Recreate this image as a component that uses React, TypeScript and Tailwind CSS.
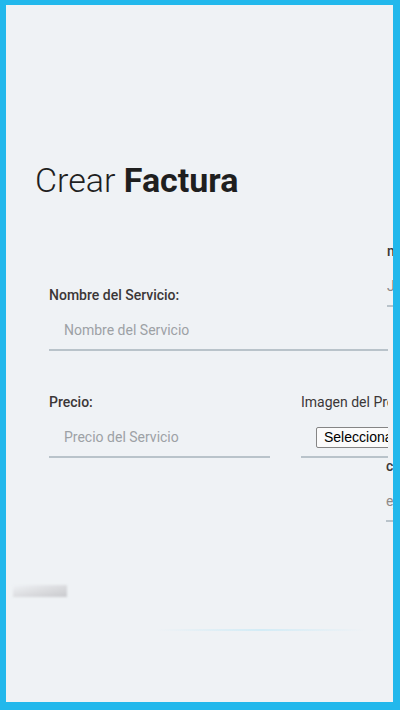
import React from "react";

const font = { fontFamily: "Roboto, 'Noto Sans', sans-serif" };

const Field = ({ label, placeholder, inset = true }: { label: string; placeholder: string; inset?: boolean }) => (
  <div className="flex flex-col">
    <label className="text-[14px] leading-[20px] font-medium text-[#3b3737] whitespace-nowrap">{label}</label>
    <input
      className={
        inset
          ? "mt-[10px] h-[36px] w-full box-border bg-transparent border-0 border-b-2 border-[#b9c3ca] px-[15px] pb-[4px] text-[14px] text-[#333] placeholder:text-[#9da1a5] outline-none"
          : "mt-[10px] h-[36px] w-full box-border bg-transparent border-0 border-b-2 border-[#b9c3ca] px-0 pb-[4px] text-[14px] text-[#333] placeholder:text-[#8f8a88] outline-none"
      }
      placeholder={placeholder}
    />
  </div>
);

export default function App() {
  return (
    <div className="w-[400px] h-[710px] bg-[#22b8ec] pl-[6px] pr-[7px] pt-[5px] pb-[8px]" style={font}>
      <div className="relative h-full bg-[#eff2f5] overflow-hidden">
        {/* Title */}
        <h1 className="pl-[29px] pt-[158px] text-[34px] leading-none text-[#1f1f1f] whitespace-nowrap">
          <span className="font-light">Crear </span>
          <span className="font-bold">Factura</span>
        </h1>

        {/* Form */}
        <form className="pl-[43px] mt-[88px]">
          <div className="flex items-start">
            <div className="w-[339px] shrink-0">
              <Field label="Nombre del Servicio:" placeholder="Nombre del Servicio" />
            </div>
            <div className="w-[200px] shrink-0 -ml-[1px] -mt-[44px]">
              <Field label="nro. de Factura:" placeholder="Juan Pérez" inset={false} />
            </div>
          </div>

          <div className="flex items-start mt-[41px]">
            <div className="w-[221px] shrink-0">
              <Field label="Precio:" placeholder="Precio del Servicio" />
            </div>
            <div className="w-[87px] shrink-0 ml-[31px] overflow-hidden">
              <label className="block text-[14px] leading-[20px] text-[#3b3737] whitespace-nowrap">Imagen del Producto:</label>
              <div className="mt-[10px] h-[36px] box-border border-b-2 border-[#b9c3ca] pl-[15px] pt-[5px] flex items-start">
                <button
                  type="button"
                  className="h-[21px] shrink-0 whitespace-nowrap border border-[#858585] rounded-[2px] bg-[#fbfbfb] pl-[7px] pr-[7px] text-[14px] leading-[19px] text-black"
                  style={{ fontFamily: "'Liberation Sans', Arial, sans-serif" }}
                >
                  Seleccionar archivo
                </button>
              </div>
            </div>
            <div className="w-[200px] shrink-0 -ml-[2px] mt-[64px]">
              <Field label="cantidad:" placeholder="ej. 1" inset={false} />
            </div>
          </div>
        </form>

        {/* faint leftovers near the bottom */}
        <div className="absolute left-[7px] top-[580px] w-[54px] h-[12px] bg-gradient-to-br from-[#eff2f5] via-[#dcdde0] to-[#c9cacd] blur-[1px]" />
        <div className="absolute left-[150px] top-[624px] w-[210px] h-[2px] bg-gradient-to-r from-transparent via-[#d3ecf6] to-transparent" />
      </div>
    </div>
  );
}
